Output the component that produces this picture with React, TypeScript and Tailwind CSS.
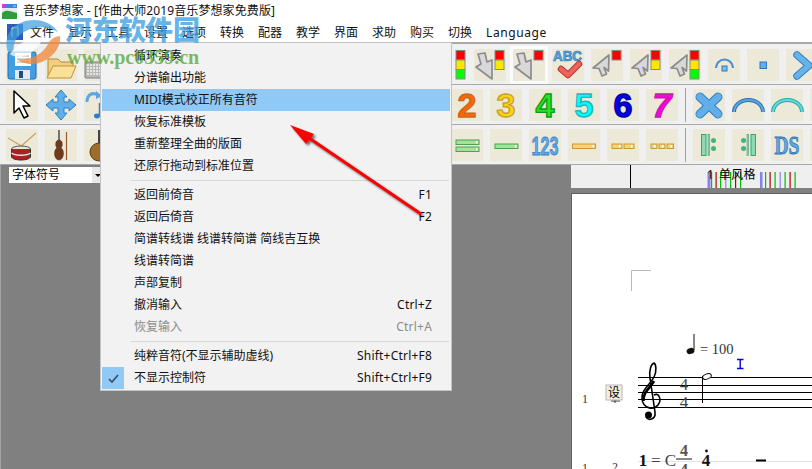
import React from "react";

const Tile = ({ children, plain, pressed }: { children?: React.ReactNode; plain?: boolean; pressed?: boolean }) => (
  <div
    className={
      "w-8 h-8 shrink-0 " +
      (plain ? "" : "bg-[#ece9d9] ") +
      (pressed ? "shadow-[0_0_0_3px_#fbfbfb,-3px_0_0_0_#a8a8a8]" : "")
    }
  >
    <svg viewBox="0 0 32 32" width="32" height="32" className="overflow-visible">
      {children}
    </svg>
  </div>
);

const Lights = ({ n }: { n: number }) => (
  <g stroke="#8a8a8a" strokeWidth="1">
    <rect x="21" y="1.5" width="9" height="9.5" fill="#ff0000" />
    {n > 1 && <rect x="21" y="11" width="9" height="9.5" fill="#ffe600" />}
    {n > 2 && <rect x="21" y="20.5" width="9" height="9.5" fill="#00ff00" />}
  </g>
);
const ArrowUp = () => (
  <polygon points="18,6 2,19 8,19.5 11,27 15.5,25 13,18.5 17.5,22" fill="#d8d8d8" stroke="#8c8c8c" strokeWidth="1.7" strokeLinejoin="round" />
);
const ArrowDown = () => (
  <polygon points="18,30 2,18 7,15 4,5 11,4 13,13 18,11" fill="#d8d8d8" stroke="#8c8c8c" strokeWidth="1.7" strokeLinejoin="round" />
);

const Num = ({ t, fill, stroke, italic }: { t: string; fill: string; stroke: string; italic?: boolean }) => (
  <text
    x="16"
    y="28"
    textAnchor="middle"
    fontFamily="'Liberation Sans',sans-serif"
    fontWeight="700"
    fontStyle={italic ? "italic" : "normal"}
    fontSize="34"
    fill={fill}
    stroke={stroke}
    strokeWidth="1.4"
  >
    {t}
  </text>
);

const Bar = ({ x, w, y = 15, h = 4.5, fill, stroke }: { x: number; w: number; y?: number; h?: number; fill: string; stroke: string }) => (
  <g>
    <rect x={x} y={y} width={w} height={h} fill={fill} stroke={stroke} strokeWidth="1" />
    <rect x={x + w - 3} y={y + 1} width="1.5" height={h - 2} fill="#ffffff" />
  </g>
);

const Sep = () => <div className="w-px h-[34px] bg-[#a0a0a0] shrink-0 -mt-px" />;

const greenF = "#a4e29a";
const greenS = "#4fa04f";
const orF = "#f6d27e";
const orS = "#c8983a";
const mintF = "#8adcb0";
const mintS = "#3fa074";

const menu: (string | [string, string?, string?])[] = [
  ["循环演奏"],
  ["分谱输出功能"],
  ["MIDI模式校正所有音符", "", "hl"],
  ["恢复标准模板"],
  ["重新整理全曲的版面"],
  ["还原行拖动到标准位置"],
  "sep",
  ["返回前倚音", "F1"],
  ["返回后倚音", "F2"],
  ["简谱转线谱 线谱转简谱 简线吉互换"],
  ["线谱转简谱"],
  ["声部复制"],
  ["撤消输入", "Ctrl+Z"],
  ["恢复输入", "Ctrl+A", "dis"],
  "sep",
  ["纯粹音符(不显示辅助虚线)", "Shift+Ctrl+F8"],
  ["不显示控制符", "Shift+Ctrl+F9", "chk"],
];

const menubar = ["文件", "显示", "工具", "设置", "选项", "转换", "配器", "教学", "界面", "求助", "购买", "切换"];

const ticks: [number, string, number][] = [
  [707.5, "#8484f0", 3], [711, "#00c000", 1.2], [715.5, "#b00000", 1.2], [720, "#00c000", 1.2], [725, "#9a9af0", 1.5], [730, "#00c000", 1.2], [735, "#b00000", 1.2], [740, "#00c000", 1.2],
  [760, "#8484f0", 2.5], [765, "#00c000", 1.2], [769.5, "#b00000", 1.2], [774.5, "#00c000", 1.2], [779.5, "#9a9af0", 1.5], [784.5, "#00c000", 1.2], [789.5, "#b00000", 1.2], [794.5, "#00c000", 1.2],
];

export default function App() {
  return (
    <div className="relative w-[812px] h-[469px] overflow-hidden bg-[#808080] flex flex-col font-['Noto_Sans','Noto_Sans_CJK_SC',sans-serif] text-[12px] text-[#111]">
      {/* title bar */}
      <div className="h-[22px] bg-white flex items-center pl-[2px] gap-[6px] shrink-0">
        <svg width="15" height="15" viewBox="0 0 15 15" className="shrink-0">
          <rect width="15" height="15" fill="#4a7de0" />
          <rect y="4" width="15" height="6" fill="#e8e8f0" />
          <path d="M0 9 C4 5 8 7 15 9 V15 H0Z" fill="#2f9e3a" />
          <rect x="0" y="0" width="3" height="3" fill="#e03ad0" />
          <rect x="11" y="1" width="3" height="2" fill="#30d0e0" />
        </svg>
        <span className="tracking-[0.1px]">音乐梦想家 - [作曲大师2019音乐梦想家免费版]</span>
      </div>
      {/* menu bar */}
      <div className="h-5 bg-white flex items-center pl-[7px] shrink-0">
        <svg width="16" height="16" viewBox="0 0 16 16" className="shrink-0 mr-[7px]">
          <rect width="16" height="16" fill="#2c5cc0" />
          <path d="M5 13 V4 M11 12 V3 M5 4 L11 3" stroke="#c8e070" strokeWidth="1.4" fill="none" />
        </svg>
        <div className="flex gap-[14px] mt-[2px]">
          {menubar.map((m) => (
            <span key={m} className="w-6 text-center whitespace-nowrap">{m}</span>
          ))}
          <span className="tracking-[0.6px]">Language</span>
        </div>
      </div>

      {/* toolbars */}
      <div className="bg-[#f0f0f0] shrink-0 border-t-2 border-[#a8a8a8]">
        <div className="h-[41px] border-b border-[#a8a8a8] flex gap-[7px] pl-[6px] pt-[5px]">
          <Tile>
            <rect x="2" y="3" width="28" height="27" rx="2" fill="#3f9fe2" stroke="#1f6fb0" />
            <rect x="9" y="4" width="16" height="13" fill="#fff" />
            <path d="M11 7H23M11 10H23M11 13H23" stroke="#9ab0c0" />
            <rect x="9" y="21" width="15" height="9" fill="#dfeaf2" />
            <rect x="13" y="22" width="4" height="7" fill="#1d4f7a" />
          </Tile>
          <Tile>
            <path d="M3 29 V10 H13 L16 13 H28 V18" fill="#f0cf80" stroke="#b88a30" />
            <path d="M2 29 L8 17 H31 L26 29Z" fill="#fbe09a" stroke="#c09434" />
          </Tile>
          <Tile>
            <rect x="1" y="13" width="30" height="16" rx="1" fill="#b8b8b8" stroke="#808080" />
            <path d="M3 16H29M3 19H29M3 22H29M3 25H29" stroke="#f2f2f2" strokeWidth="1.6" strokeDasharray="2 1" />
          </Tile>
          <div className="w-[305px] shrink-0" />
          <Tile plain><Lights n={3} /></Tile>
          <Tile><ArrowDown /><Lights n={2} /></Tile>
          <Tile pressed><ArrowDown /><Lights n={1} /></Tile>
          <Tile>
            <text x="15.5" y="12" textAnchor="middle" fontFamily="'Liberation Sans',sans-serif" fontWeight="700" fontSize="14" textLength="29" lengthAdjust="spacingAndGlyphs" fill="#5aa4e0" stroke="#2f7cc0" strokeWidth="0.7">ABC</text>
            <path d="M9 20 L16 26 L27 15" fill="none" stroke="#b03a30" strokeWidth="6.5" strokeLinejoin="round" strokeLinecap="round" />
            <path d="M9 20 L16 26 L27 15" fill="none" stroke="#f0625a" strokeWidth="4.5" strokeLinejoin="round" strokeLinecap="round" />
          </Tile>
          <Tile><ArrowUp /><Lights n={1} /></Tile>
          <Tile><ArrowUp /><Lights n={2} /></Tile>
          <Tile><ArrowUp /><Lights n={3} /></Tile>
          <Tile>
            <path d="M8 19 A8.5 8.5 0 0 1 25 19" fill="none" stroke="#4a90d0" strokeWidth="2.2" />
            <rect x="14" y="17" width="5" height="5" fill="#7cbcec" stroke="#2a78c0" />
          </Tile>
          <Tile><rect x="13" y="13" width="6.5" height="6.5" fill="#62aee8" stroke="#2a78c0" /></Tile>
          <Tile>
            <path d="M11 6 L23 16.5 L11 27" fill="none" stroke="#2f80c4" strokeWidth="7.5" strokeLinejoin="round" strokeLinecap="round" />
            <path d="M11 6 L23 16.5 L11 27" fill="none" stroke="#68b2ea" strokeWidth="5.5" strokeLinejoin="round" strokeLinecap="round" />
          </Tile>
        </div>

        <div className="h-10 border-b border-[#a8a8a8] flex items-start gap-[7px] pl-[6px] pt-1">
          <Tile>
            <polygon points="8,2 8,24 13,19 18,29 22,27 17,17 24,17" fill="#fff" stroke="#000" strokeWidth="1.5" strokeLinejoin="round" />
          </Tile>
          <Tile>
            <polygon points="16,1 22,8 19,8 19,13 24,13 24,10 31,16 24,22 24,19 19,19 19,24 22,24 16,31 10,24 13,24 13,19 8,19 8,22 1,16 8,10 8,13 13,13 13,8 10,8" fill="#62aee8" stroke="#2f80c4" strokeLinejoin="round" />
          </Tile>
          <Tile>
            <path d="M3 13 C3 5 9 3 14 6" fill="none" stroke="#5aa6e2" strokeWidth="3" />
            <path d="M12 2 L18 7 L12 10Z" fill="#5aa6e2" />
            <ellipse cx="13" cy="27" rx="3" ry="2.4" fill="#2f80c4" />
            <path d="M15.5 27 V14" stroke="#2f80c4" strokeWidth="1.5" />
          </Tile>
          <div className="w-[321px] shrink-0" />
          <Tile><Num t="2" fill="#ff6600" stroke="#c86a20" /></Tile>
          <Tile><Num t="3" fill="#ffd400" stroke="#c8a040" /></Tile>
          <Tile><Num t="4" fill="#22e622" stroke="#129a12" /></Tile>
          <Tile><Num t="5" fill="#00ffff" stroke="#22b8b8" /></Tile>
          <Tile><Num t="6" fill="#0000f0" stroke="#0000a0" /></Tile>
          <Tile><Num t="7" fill="#ff00e0" stroke="#c020b0" italic /></Tile>
          <Sep />
          <Tile>
            <path d="M7 8 L25 25 M25 8 L7 25" stroke="#2f80c4" strokeWidth="9" strokeLinecap="round" />
            <path d="M7 8 L25 25 M25 8 L7 25" stroke="#62aee8" strokeWidth="7" strokeLinecap="round" />
          </Tile>
          <Tile>
            <path d="M2 23 A14.5 12 0 0 1 31 23" fill="none" stroke="#2f70b0" strokeWidth="4" />
            <path d="M2 23 A14.5 12 0 0 1 31 23" fill="none" stroke="#5aa6e2" strokeWidth="2" />
          </Tile>
          <Tile>
            <path d="M2 23 A14.5 12 0 0 1 31 23" fill="none" stroke="#28a8a8" strokeWidth="4" />
            <path d="M2 23 A14.5 12 0 0 1 31 23" fill="none" stroke="#60dcd8" strokeWidth="2" />
          </Tile>
          <Tile />
        </div>

        <div className="h-10 border-b border-[#a8a8a8] flex items-start gap-[7px] pl-[6px] pt-1">
          <Tile>
            <path d="M2 9 L22 21 M30 4 L12 20" stroke="#c8a060" strokeWidth="1.2" />
            <ellipse cx="15" cy="20" rx="9.5" ry="3" fill="#e8e4d8" stroke="#555" />
            <path d="M5.5 20 V28 C7 32 23 32 24.5 28 V20" fill="#a82020" stroke="#333" />
            <path d="M5.5 24 C9 27 21 27 24.5 24" fill="none" stroke="#eee" strokeWidth="1.5" />
          </Tile>
          <Tile>
            <path d="M14 1 V12" stroke="#555" strokeWidth="1.6" />
            <path d="M14 11 C10 11 10 17 12 19 C8 21 9 31 14 31 C19 31 20 21 16 19 C18 17 18 11 14 11Z" fill="#6f3a1c" stroke="#4a2410" strokeWidth="0.5" />
            <path d="M21.5 3 V31" stroke="#9a5a30" strokeWidth="1.2" />
          </Tile>
          <Tile>
            <path d="M15 1 V14" stroke="#444" strokeWidth="2" />
            <circle cx="15" cy="23" r="9" fill="#a06c2c" stroke="#5a3a14" />
          </Tile>
          <div className="w-[321px] shrink-0" />
          <Tile>
            <Bar x={5} w={23} y={11} fill={greenF} stroke={greenS} />
            <Bar x={5} w={23} y={18} fill={greenF} stroke={greenS} />
          </Tile>
          <Tile><Bar x={5} w={23} fill={greenF} stroke={greenS} /></Tile>
          <Tile>
            <text x="16" y="26" textAnchor="middle" fontFamily="'Liberation Sans',sans-serif" fontWeight="700" fontSize="25" textLength="27" lengthAdjust="spacingAndGlyphs" fill="#60a8e4" stroke="#3a80c4" strokeWidth="0.8">123</text>
          </Tile>
          <Tile><Bar x={4.5} w={23} fill={orF} stroke={orS} /></Tile>
          <Tile>
            <Bar x={5} w={10} fill={orF} stroke={orS} />
            <Bar x={17} w={10} fill={orF} stroke={orS} />
          </Tile>
          <Tile>
            <Bar x={5} w={6} fill={orF} stroke={orS} />
            <Bar x={13} w={6} fill={orF} stroke={orS} />
            <Bar x={21} w={6.5} fill={orF} stroke={orS} />
          </Tile>
          <Sep />
          <Tile>
            <rect x="8.5" y="5.5" width="4.5" height="21" fill={mintF} stroke={mintS} />
            <rect x="15" y="5.5" width="1.6" height="21" fill={mintF} stroke={mintS} strokeWidth="0.6" />
            <circle cx="20.5" cy="11.5" r="2.5" fill="#44b47c" />
            <circle cx="20.5" cy="19.5" r="2.5" fill="#44b47c" />
          </Tile>
          <Tile>
            <circle cx="11.5" cy="11.5" r="2.5" fill="#44b47c" />
            <circle cx="11.5" cy="19.5" r="2.5" fill="#44b47c" />
            <rect x="15" y="5.5" width="1.6" height="21" fill={mintF} stroke={mintS} strokeWidth="0.6" />
            <rect x="19" y="5.5" width="4.5" height="21" fill={mintF} stroke={mintS} />
          </Tile>
          <Tile>
            <text x="16" y="25" textAnchor="middle" fontFamily="'Liberation Serif',serif" fontWeight="700" fontSize="26" textLength="25" lengthAdjust="spacingAndGlyphs" fill="#62a8e2" stroke="#2f72b4" strokeWidth="0.8">DS</text>
          </Tile>
          <Tile />
        </div>
      </div>

      {/* lower area */}
      <div className="flex-1 flex min-h-0">
        <div className="w-[571px] shrink-0 pl-[8px] pt-[2px] border-l border-[#a4a4a4]">
          <div className="w-[95px] h-4 bg-white flex items-center justify-between text-black">
            <span className="pl-[3px] leading-4">字体符号</span>
            <span className="w-3 h-4 bg-[#e8e8e8] flex items-center justify-center">
              <span className="w-0 h-0 border-x-[3px] border-x-transparent border-t-[3px] border-t-black" />
            </span>
          </div>
        </div>
        <div className="flex-1 flex flex-col min-w-0">
          <div className="relative h-[23px] bg-[#efefef] shrink-0">
            <svg viewBox="571 165 241 23" width="241" height="23" className="block">
              <rect x="630" y="165" width="1" height="23" fill="#000" />
              {ticks.map(([x, c, w]) => (
                <rect key={x} x={x} y="172" width={w} height="16" fill={c} />
              ))}
            </svg>
            <div className="absolute left-[136px] top-0 h-[19px] flex items-center gap-[5px] text-black">
              <span>1</span>
              <span className="tracking-[0.3px]">单风格</span>
            </div>
          </div>
          <div className="mt-[5px] flex-1 bg-white border-l border-t border-[#606060] min-h-0">
            <svg viewBox="572 194 240 275" width="240" height="275" className="block">
              <path d="M651 270.5 H631.5 V291" fill="none" stroke="#bbb" />
              {/* tempo */}
              <ellipse cx="690.5" cy="351" rx="4" ry="3" fill="#111" transform="rotate(-20 690.5 351)" />
              <path d="M694 350 V334" stroke="#111" strokeWidth="1" />
              <text x="700" y="354" fontFamily="'Liberation Serif',serif" fontSize="14.5" fill="#333">= 100</text>
              <path d="M737 359.5 H743.5 M737 368.5 H743.5 M740.2 359.5 V368.5" stroke="#0000e0" strokeWidth="1.4" />
              {/* staff */}
              {[377.5, 385.5, 392.5, 399.5, 407.5].map((y) => (
                <path key={y} d={`M638 ${y} H812`} stroke="#000" strokeWidth="1" />
              ))}
              {/* clef */}
              <path
                d="M654 395 C659 392 662 400 658 405 C653 411 643 408 642 399 C641 390 650 385 654 377 C657 371 656 364 654 363 C651 364 649 370 650 378 L655 412 C656 420 648 421 646 417"
                fill="none"
                stroke="#000"
                strokeWidth="1.6"
              />
              <path d="M643.5 401 C643 392 650 388 654 381" fill="none" stroke="#000" strokeWidth="2.6" />
              <circle cx="648.5" cy="415" r="3.5" fill="#000" />
              <text x="684" y="390" textAnchor="middle" fontFamily="'Liberation Serif',serif" fontSize="17" fill="#444">4</text>
              <text x="684" y="408" textAnchor="middle" fontFamily="'Liberation Serif',serif" fontSize="17" fill="#444">4</text>
              <path d="M702.5 376 V403" stroke="#000" strokeWidth="1" />
              <ellipse cx="707" cy="376.5" rx="4.5" ry="2.5" fill="#fff" stroke="#000" transform="rotate(-20 707 376.5)" />
              <text x="585" y="403" textAnchor="middle" fontFamily="'Liberation Serif',serif" fontSize="12" fill="#333">1</text>
              <path d="M615 400 V403 M611 401 H620" stroke="#333" />
              <rect x="606" y="385" width="16" height="15" fill="#f2efdf" stroke="#b8b8b8" />
              <text x="614" y="397" textAnchor="middle" fontFamily="'Noto Sans CJK SC',sans-serif" fontSize="12" fill="#000">设</text>
              {/* second system */}
              <path d="M638 461.5 H812" stroke="#e2e2e2" />
              <text x="585" y="472" textAnchor="middle" fontFamily="'Liberation Serif',serif" fontSize="12" fill="#333">1</text>
              <text x="615" y="471" textAnchor="middle" fontFamily="'Liberation Serif',serif" fontSize="12" fill="#333">2</text>
              <text x="643" y="466" textAnchor="middle" fontFamily="'Liberation Serif',serif" fontWeight="700" fontSize="17" fill="#111">1</text>
              <text x="651" y="466" fontFamily="'Liberation Serif',serif" fontSize="17" fill="#444">= C</text>
              <text x="684" y="456" textAnchor="middle" fontFamily="'Liberation Serif',serif" fontWeight="700" fontSize="16" fill="#555">4</text>
              <rect x="676" y="458" width="16" height="2" fill="#888" />
              <text x="684" y="475" textAnchor="middle" fontFamily="'Liberation Serif',serif" fontWeight="700" fontSize="16" fill="#555">4</text>
              <text x="706" y="466" textAnchor="middle" fontFamily="'Liberation Serif',serif" fontWeight="700" fontSize="17" fill="#111">4</text>
              <circle cx="706.5" cy="451" r="1.4" fill="#111" />
              <rect x="756" y="459.5" width="10" height="2" fill="#000" />
            </svg>
          </div>
        </div>
      </div>

      {/* dropdown menu */}
      <div className="absolute left-[100px] top-[42px] w-[352px] h-[349px] bg-[#f2f2f2] border border-[#c4c4c4] py-[2px] px-px">
        {menu.map((m, i) => {
          if (typeof m === "string") {
            return (
              <div key={i} className="h-[7px] flex items-center pl-[29px] pr-px">
                <div className="h-px w-full bg-[#d7d7d7]" />
              </div>
            );
          }
          const [label, sc, kind] = m;
          return (
            <div
              key={i}
              className={
                "h-[22px] flex items-center pr-[18px] relative " +
                (kind === "hl" ? "bg-[#90c8f6] " : "") +
                (kind === "dis" ? "text-[#8c8c8c] " : "")
              }
            >
              <div className={"w-[22px] h-[22px] shrink-0 mr-[10px] flex items-center justify-center " + (kind === "chk" ? "bg-[#90c8f6]" : "")}>
                {kind === "chk" && (
                  <svg width="11" height="9" viewBox="0 0 11 9">
                    <path d="M1 5 L4 8 L10 1" fill="none" stroke="#3a4a58" strokeWidth="1.6" />
                  </svg>
                )}
              </div>
              <span className="whitespace-pre flex-1">{label}</span>
              {sc && <span className="tracking-[0.2px]">{sc}</span>}
            </div>
          );
        })}
      </div>

      {/* red annotation arrow */}
      <svg className="absolute left-[280px] top-[115px] drop-shadow-[2px_2px_1px_rgba(0,0,0,0.55)]" width="150" height="110" viewBox="280 115 150 110">
        <path d="M421 214 L309 138" stroke="#ff0000" strokeWidth="3" />
        <polygon points="290,125 314,134 306,144" fill="#ff0000" />
      </svg>

      {/* watermark */}
      <svg className="absolute left-[3px] top-[18px] opacity-90" width="62" height="50" viewBox="3 18 62 50">
        <path d="M8 52 C2 36 14 20 34 20 C46 20 54 26 58 32 C48 26 36 26 28 30 C18 34 12 42 14 52Z" fill="#3f9fe0" fillOpacity="0.8" />
        <path d="M10 54 C18 42 30 38 46 36 C40 44 34 50 30 54 C24 58 14 58 10 54Z" fill="#ffffff" fillOpacity="0.8" />
        <path d="M60 36 C62 50 46 64 32 64 C26 64 20 62 17 59 C30 61 44 54 49 42 C52 38 56 36 60 36Z" fill="#f0883a" fillOpacity="0.85" />
      </svg>
      <div className="absolute left-[65px] top-[10px] font-['Noto_Sans_CJK_SC',sans-serif] font-black text-[27px] leading-[38px] text-[#3f9fe0]/80 whitespace-nowrap">
        河东软件园
      </div>
      <div className="absolute left-[67px] top-[45px] font-['Liberation_Serif',serif] font-bold text-[20px] leading-[24px] text-[#5aa83c]/80 whitespace-nowrap">
        www.pc0359.cn
      </div>
    </div>
  );
}
